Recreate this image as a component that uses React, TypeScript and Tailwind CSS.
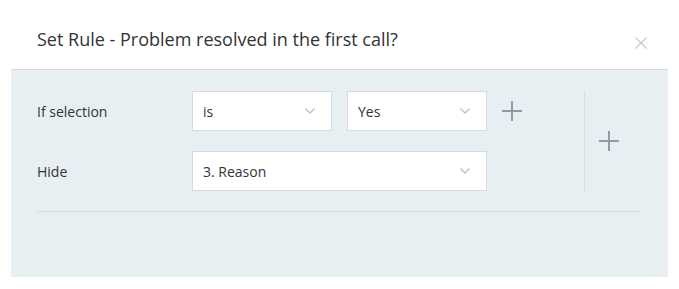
import { type ReactNode } from "react";

function Chevron() {
  return (
    <svg width="10" height="6" viewBox="0 0 10 6" fill="none" className="shrink-0">
      <polyline points="0.5,0.5 5,5 9.5,0.5" stroke="#b9c0c8" strokeWidth="1.3" />
    </svg>
  );
}

function Plus() {
  return (
    <svg width="20" height="20" viewBox="0 0 20 20" className="shrink-0">
      <line x1="10" y1="0" x2="10" y2="20" stroke="#8d9ea8" strokeWidth="2" />
      <line x1="0" y1="10" x2="20" y2="10" stroke="#8d9ea8" strokeWidth="2" />
    </svg>
  );
}

function Select({ value, className }: { value: string; className: string }) {
  return (
    <div
      className={`flex h-[40px] items-center justify-between border border-[#d4dce2] bg-white pl-[10px] pr-[16px] text-[14px] text-[#333] ${className}`}
    >
      <span>{value}</span>
      <Chevron />
    </div>
  );
}

function Row({ label, children }: { label: string; children: ReactNode }) {
  return (
    <div className="flex items-center">
      <span className="w-[155px] shrink-0 text-[14px] text-[#333]">{label}</span>
      {children}
    </div>
  );
}

export default function App() {
  return (
    <div className="h-[289px] w-[679px] bg-white font-['Open_Sans',sans-serif]">
      <div className="flex h-[69px] items-start justify-between pl-[37px] pr-[32px] pt-[27px]">
        <h2 className="text-[18px] leading-[24px] text-[#333]">
          Set Rule - Problem resolved in the first call?
        </h2>
        <svg width="12" height="12" viewBox="0 0 12 12" className="mt-[10px]">
          <line x1="0.5" y1="0.5" x2="11.5" y2="11.5" stroke="#c9c9c9" strokeWidth="1.2" />
          <line x1="11.5" y1="0.5" x2="0.5" y2="11.5" stroke="#c9c9c9" strokeWidth="1.2" />
        </svg>
      </div>

      <div className="mx-[11px] h-[208px] border-t border-[#d2dadf] bg-[#e8eff3] pl-[26px] pt-[21px]">
        <div className="flex w-[602px]">
          <div className="flex w-[547px] flex-col gap-[20px]">
            <Row label="If selection">
              <Select value="is" className="w-[140px]" />
              <Select value="Yes" className="ml-[15px] w-[140px]" />
              <div className="ml-[15px]">
                <Plus />
              </div>
            </Row>
            <Row label="Hide">
              <Select value="3. Reason" className="w-[295px]" />
            </Row>
          </div>
          <div className="flex items-center border-l border-[#d4dce2] pl-[14px]">
            <Plus />
          </div>
        </div>
        <div className="mt-[20px] h-px w-[602px] bg-[#d4dce2]" />
      </div>
    </div>
  );
}
